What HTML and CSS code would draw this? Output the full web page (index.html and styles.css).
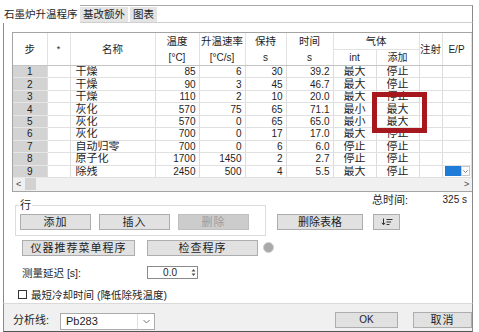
FILE: index.html
```html
<!DOCTYPE html>
<html lang="zh">

<head>
    <meta charset="UTF-8">
    <title>石墨炉升温程序</title>
    <link rel="stylesheet" href="styles.css">
</head>

<body>
    <div class="window">
        <div class="tabbar">
            <div class="tab active">石墨炉升温程序</div>
            <div class="tab-rest">
                <div class="tab">基改额外</div>
                <div class="tab">图表</div>
            </div>
        </div>

        <div class="panel">
            <div class="grid-box">
                <table class="grid">
                    <colgroup>
                        <col style="width: 34px">
                        <col style="width: 23px">
                        <col style="width: 85px">
                        <col style="width: 44px">
                        <col style="width: 46px">
                        <col style="width: 41px">
                        <col style="width: 47px">
                        <col style="width: 43px">
                        <col style="width: 43px">
                        <col style="width: 23px">
                        <col style="width: 29px">
                    </colgroup>
                    <thead>
                        <tr class="h1">
                            <th rowspan="2">步</th>
                            <th rowspan="2" class="star">*</th>
                            <th rowspan="2">名称</th>
                            <th>温度</th>
                            <th>升温速率</th>
                            <th>保持</th>
                            <th>时间</th>
                            <th colspan="2" class="gas">气体</th>
                            <th rowspan="2">注射</th>
                            <th rowspan="2" class="ep">E/P</th>
                        </tr>
                        <tr class="h2">
                            <th>[°C]</th>
                            <th>[°C/s]</th>
                            <th>s</th>
                            <th>s</th>
                            <th>int</th>
                            <th>添加</th>
                        </tr>
                    </thead>
                    <tbody id="rows"></tbody>
                </table>
                <div class="hscroll">
                    <span class="arr">&lt;</span>
                    <span class="thumb"></span>
                    <span class="arr end">&gt;</span>
                </div>
            </div>

            <div class="ctl-top">
                <div class="group">
                    <span class="legend">行</span>
                    <button class="btn">添加</button>
                    <button class="btn">插入</button>
                    <button class="btn off">删除</button>
                </div>
                <div class="side">
                    <div class="total"><span>总时间:</span><span class="val">325 s</span></div>
                    <div class="side-btns">
                        <button class="btn wide">删除表格</button>
                        <button class="btn sort">
                            <svg width="12" height="8" viewBox="0 0 12 8">
                                <path d="M2.5 0.5v6M0.8 4.8l1.7 2 1.7-2" fill="none" stroke="#333" stroke-width="1"/>
                                <path d="M5.5 1.5h6M5.5 4h4.5M5.5 6.5h3" stroke="#333" stroke-width="1"/>
                            </svg>
                        </button>
                    </div>
                </div>
            </div>

            <div class="row-b">
                <button class="btn menu">仪器推荐菜单程序</button>
                <button class="btn check">检查程序</button>
                <span class="dot"></span>
            </div>

            <div class="row-c">
                <span class="lbl">测量延迟 [s]:</span>
                <div class="spin">
                    <span class="spin-val">0.0</span>
                    <span class="spin-btns">
                        <svg width="5" height="9" viewBox="0 0 5 9">
                            <path d="M0.5 3.5l2-2.5 2 2.5z M0.5 5.5l2 2.5 2-2.5z" fill="#555"/>
                        </svg>
                    </span>
                </div>
            </div>

            <div class="row-d">
                <span class="box"></span>
                <span>最短冷却时间 (降低除残温度)</span>
            </div>

            <div class="mark"></div>
        </div>

        <div class="footer">
            <span class="flbl">分析线:</span>
            <div class="select">
                <span class="sel-val">Pb283</span>
                <span class="sel-arr">
                    <svg width="7" height="5" viewBox="0 0 7 5">
                        <path d="M0.5 1l3 3 3-3" fill="none" stroke="#777" stroke-width="1"/>
                    </svg>
                </span>
            </div>
            <button class="btn ok">OK</button>
            <button class="btn cancel">取消</button>
        </div>
    </div>

    <script>
        let steps = [
            [1, '干燥', 85, 6, 30, '39.2', '最大', '停止'],
            [2, '干燥', 90, 3, 45, '46.7', '最大', '停止'],
            [3, '干燥', 110, 2, 10, '20.0', '最大', '停止'],
            [4, '灰化', 570, 75, 65, '71.1', '最小', '最大'],
            [5, '灰化', 570, 0, 65, '65.0', '最小', '最大'],
            [6, '灰化', 700, 0, 17, '17.0', '最大', '停止'],
            [7, '自动归零', 700, 0, 6, '6.0', '停止', '停止'],
            [8, '原子化', 1700, 1450, 2, '2.7', '停止', '停止'],
            [9, '除残', 2450, 500, 4, '5.5', '最大', '停止']
        ];
        let text = '';
        for (let i = 0; i < steps.length; i++) {
            let s = steps[i];
            let ep = i == steps.length - 1
                ? `<div class="combo"><span class="combo-sel"></span><span class="combo-arr"><svg width="5" height="3" viewBox="0 0 5 3"><path d="M0.3 0.3l2.2 2.2 2.2-2.2" fill="none" stroke="#666" stroke-width="0.8"/></svg></span></div>`
                : '';
            text += `<tr>
                        <td class="no">${s[0]}</td>
                        <td></td>
                        <td class="name">${s[1]}</td>
                        <td class="num">${s[2]}</td>
                        <td class="num">${s[3]}</td>
                        <td class="num">${s[4]}</td>
                        <td class="num">${s[5]}</td>
                        <td class="mid">${s[6]}</td>
                        <td class="mid">${s[7]}</td>
                        <td></td>
                        <td class="ep-cell">${ep}</td>
                    </tr>`;
        }
        document.getElementById('rows').innerHTML = text;
    </script>
</body>

</html>
```

FILE: styles.css
```css
body {
    margin: 0;
    padding: 0;
    width: 479px;
    height: 332px;
    overflow: hidden;
    background-color: #fff;
    color: #1e1e1e;
    font-family: "Liberation Sans", "Noto Sans CJK SC", sans-serif;
    font-size: 11px;
}

.window {
    margin-left: 3px;
    width: 470px;
}

/* tabs */
.tabbar {
    display: flex;
    width: 473px;
    height: 18px;
    margin-top: 5px;
    margin-left: -3px;
}

.tab {
    font-size: 10.5px;
    line-height: 15px;
    height: 15px;
    padding: 0 3px;
    background-color: #e4e4e4;
    white-space: nowrap;
}

.tab.active {
    width: 80px;
    height: 18px;
    line-height: 18px;
    box-sizing: border-box;
    padding-left: 4px;
    background-color: #fff;
}

.tab-rest {
    flex: 1;
    display: flex;
    align-items: flex-end;
    gap: 2px;
    box-sizing: border-box;
    border-top: 1px solid #a8a8a8;
    border-right: 1px solid #8a8a8a;
    border-bottom: 1px solid #cfcfcf;
}

/* main panel */
.panel {
    position: relative;
    height: 280px;
    box-sizing: border-box;
    border-left: 1px solid #8a8a8a;
    border-right: 1px solid #8a8a8a;
    padding-top: 9px;
}

.grid-box {
    margin-left: 8px;
    width: 459px;
    border: 1px solid #a4a4a4;
    border-right: none;
}

.grid {
    border-collapse: collapse;
    table-layout: fixed;
    width: 458px;
}

.grid th {
    font-weight: normal;
    font-size: 10.5px;
    height: 15px;
    padding: 0;
    line-height: 13px;
    text-align: center;
    border-right: 1px solid #e2e2e2;
    white-space: nowrap;
}

.grid .h1 th {
    padding-top: 1px;
}

.grid .h2 th {
    border-bottom: 1px solid #c4c4c4;
    font-size: 10px;
}

.grid th[rowspan] {
    border-bottom: 1px solid #c4c4c4;
}

.grid th.gas {
    border-bottom: 1px solid #e2e2e2;
}

.grid th.star {
    font-size: 9px;
}

.grid th.ep {
    font-size: 10px;
}

.grid td {
    height: 11.45px;
    padding: 0;
    line-height: 11px;
    font-size: 10px;
    border-right: 1px solid #dcdcdc;
    border-bottom: 1px solid #e0e0e0;
    white-space: nowrap;
    overflow: hidden;
}

.grid td.no {
    background-color: #d3d3d3;
    text-align: center;
    border-bottom-color: #e6e6e6;
}

.grid td.name {
    font-size: 11px;
    padding-left: 5px;
}

.grid td.num {
    text-align: right;
    padding-right: 3px;
}

.grid td.mid {
    text-align: center;
    font-size: 11px;
}

.grid td.ep-cell {
    padding: 0 1px 0 2px;
}

.combo {
    display: flex;
    height: 10px;
}

.combo-sel {
    flex: 1;
    background-color: #1f7bd8;
}

.combo-arr {
    width: 9px;
    display: flex;
    align-items: center;
    justify-content: center;
    background-color: #fafafa;
    border: 1px solid #c8c8c8;
    box-sizing: border-box;
}

.hscroll {
    display: flex;
    align-items: center;
    height: 13px;
    background-color: #f0f0f0;
    font-size: 9px;
    color: #444;
}

.hscroll .arr {
    padding-left: 3px;
    width: 6px;
}

.hscroll .thumb {
    width: 11px;
    height: 12px;
    margin-left: 3px;
    background-color: #d2d2d2;
}

.hscroll .arr.end {
    margin-left: auto;
    padding-right: 2px;
}

/* controls */
.btn {
    box-sizing: border-box;
    height: 16px;
    padding: 0;
    margin: 0;
    border: 1px solid #adadad;
    background-color: #e1e1e1;
    color: #1e1e1e;
    font-family: "Liberation Sans", "Noto Sans CJK SC", sans-serif;
    font-size: 11px;
    line-height: 14px;
    letter-spacing: 1px;
    text-align: center;
}

.btn.off {
    background-color: #cccccc;
    border-color: #bfbfbf;
    color: #9c9c9c;
}

.ctl-top {
    display: flex;
    align-items: flex-start;
}

.group {
    position: relative;
    display: flex;
    align-items: flex-start;
    gap: 8px;
    width: 251px;
    height: 31px;
    box-sizing: border-box;
    margin: 13px 0 0 11px;
    padding: 8px 0 0 4px;
    border: 1px solid #dcdcdc;
}

/* group caption sits over the top border */
.group .legend {
    position: absolute;
    top: -7px;
    left: 3px;
    padding: 0 1px;
    background-color: #fff;
    font-size: 11px;
    line-height: 12px;
}

.group .btn {
    width: 71px;
}

.side {
    margin-left: 11px;
    width: 194px;
}

.total {
    display: flex;
    margin-top: 1px;
    height: 14px;
    line-height: 14px;
    padding-left: 95px;
    font-size: 11px;
}

.total .val {
    margin-left: auto;
    padding-right: 4px;
    font-size: 10px;
}

.side-btns {
    display: flex;
    margin-top: 7px;
}

.btn.wide {
    width: 86px;
    letter-spacing: 0;
}

.btn.sort {
    width: 27px;
    margin-left: 10px;
    display: flex;
    align-items: center;
    justify-content: center;
}

.row-b {
    display: flex;
    align-items: center;
    margin: 4px 0 0 18px;
}

.btn.menu {
    width: 113px;
}

.btn.check {
    width: 111px;
    margin-left: 12px;
}

.dot {
    width: 9px;
    height: 9px;
    margin-left: 5px;
    border-radius: 50%;
    background-color: #a9a9a9;
    border: 1px solid #cfcfcf;
}

.row-c {
    display: flex;
    align-items: center;
    margin: 9px 0 0 18px;
    font-size: 10.5px;
}

.row-c .lbl {
    width: 125px;
}

.spin {
    display: flex;
    width: 51px;
    height: 13px;
    box-sizing: border-box;
    border: 1px solid #8a8a8a;
    background-color: #fff;
}

.spin-val {
    flex: 1;
    text-align: right;
    padding-right: 13px;
    line-height: 11px;
    font-size: 10px;
}

.spin-btns {
    width: 7px;
    display: flex;
    align-items: center;
    justify-content: center;
}

.row-d {
    display: flex;
    align-items: center;
    gap: 4px;
    margin: 7px 0 0 14px;
    font-size: 10.5px;
}

.row-d .box {
    width: 9px;
    height: 9px;
    box-sizing: border-box;
    border: 1px solid #333;
    background-color: #fff;
}

/* highlight drawn over the gas column */
.mark {
    position: absolute;
    left: 368px;
    top: 69px;
    width: 55px;
    height: 41px;
    box-sizing: border-box;
    border: 5px solid #a6181e;
}

/* footer */
.footer {
    display: flex;
    align-items: flex-start;
    height: 29px;
    box-sizing: border-box;
    padding-top: 8px;
    background-color: #f0f0f0;
    border-top: 1px solid #dadada;
    border-left: 1px solid #8a8a8a;
    border-right: 1px solid #8a8a8a;
    border-bottom: 1px solid #555;
}

.flbl {
    width: 47px;
    padding-left: 9px;
    line-height: 17px;
    font-size: 11px;
}

.select {
    display: flex;
    width: 95px;
    height: 17px;
    margin-top: 1px;
    box-sizing: border-box;
    border: 1px solid #ababab;
    background-color: #fff;
}

.sel-val {
    flex: 1;
    padding-left: 5px;
    line-height: 15px;
    font-size: 11px;
}

.sel-arr {
    width: 16px;
    display: flex;
    align-items: center;
    justify-content: center;
    border-left: 1px solid #e0e0e0;
}

.btn.ok {
    width: 63px;
    margin-left: auto;
    letter-spacing: 0;
    font-size: 10px;
}

.btn.cancel {
    width: 59px;
    margin-left: 15px;
}
```
